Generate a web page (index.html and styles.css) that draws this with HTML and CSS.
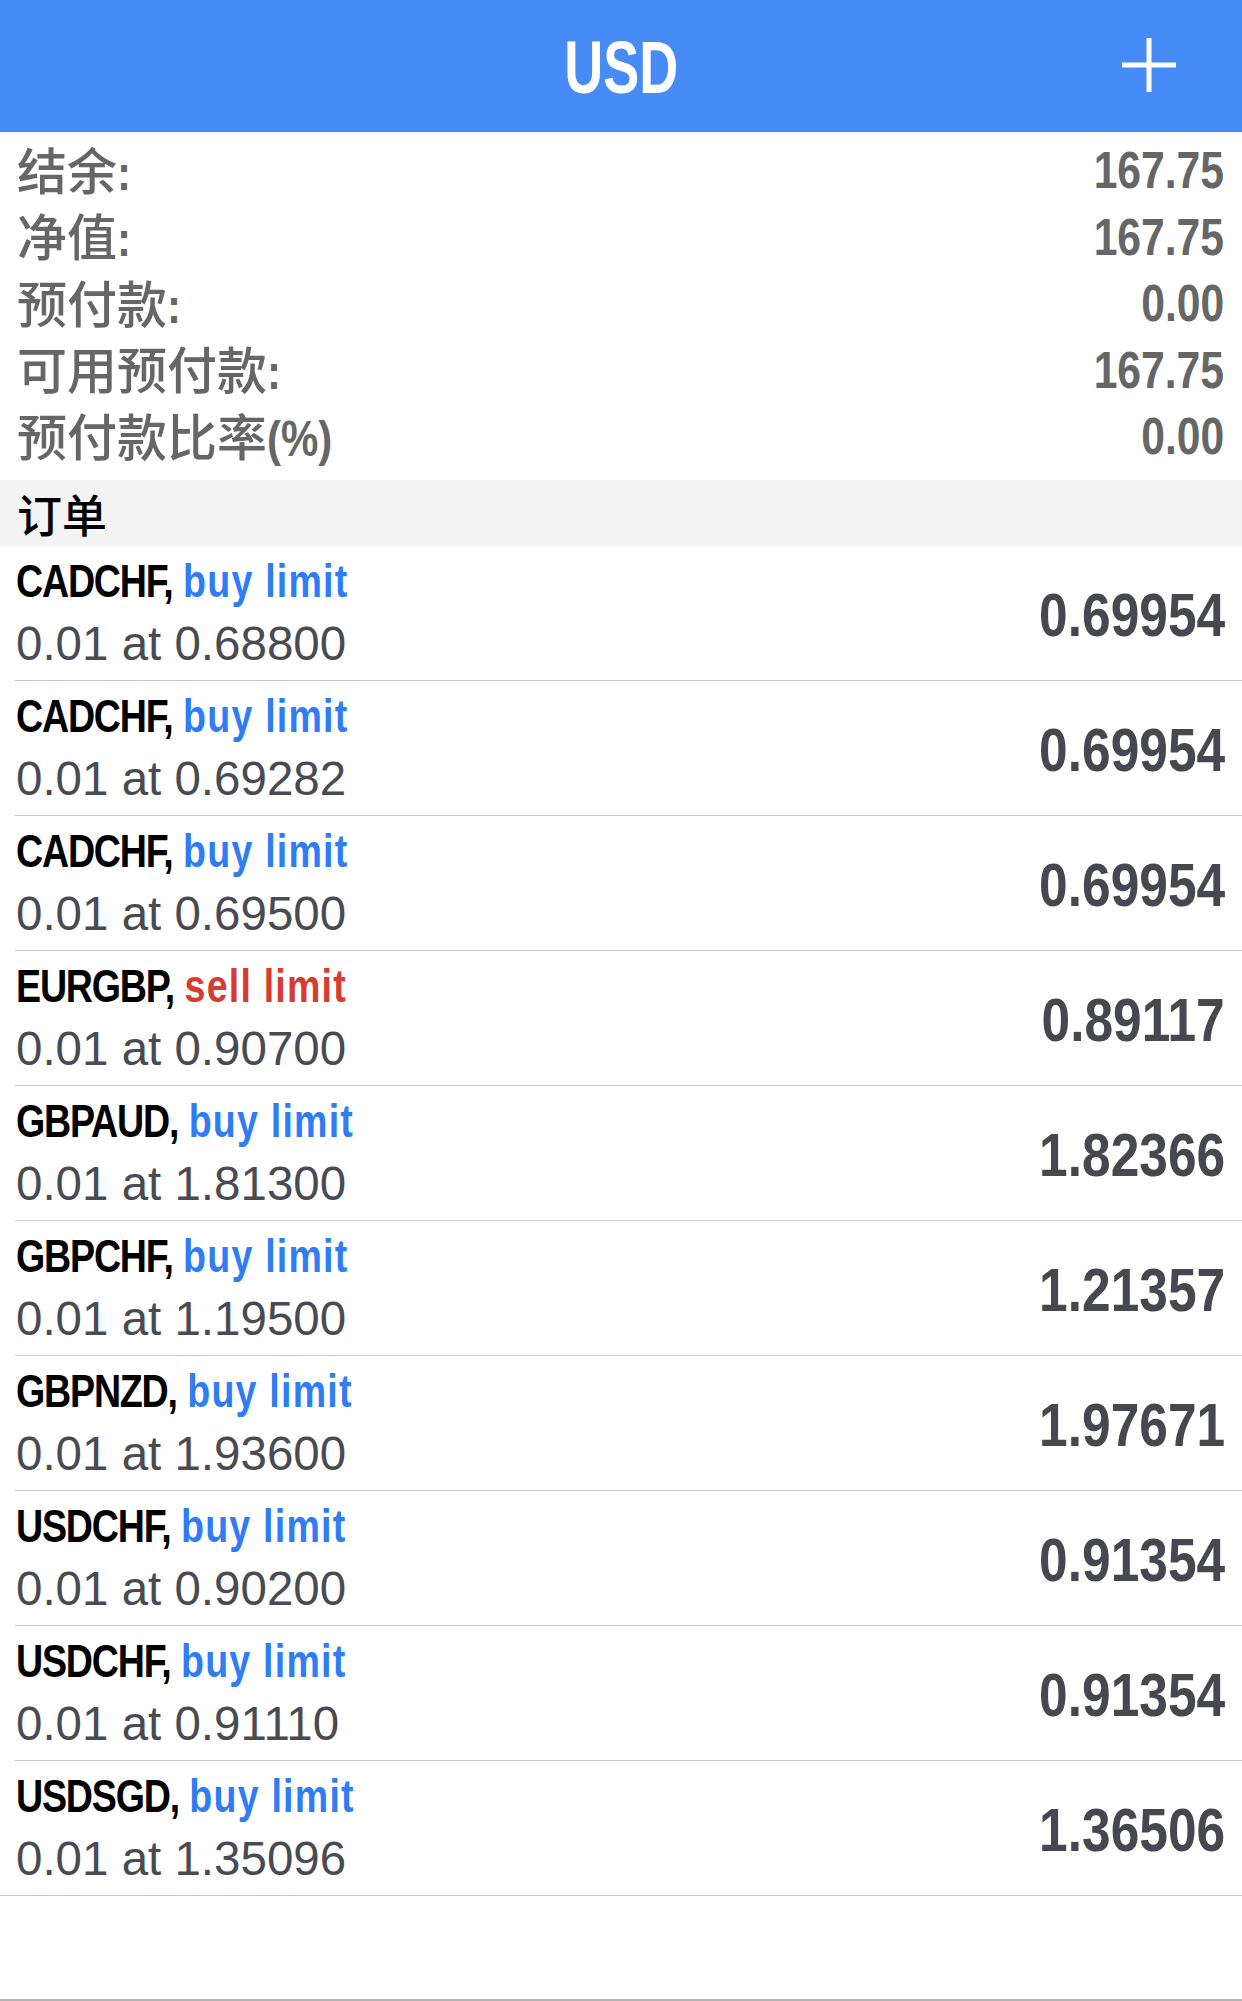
FILE: index.html
```html
<!DOCTYPE html>
<html lang="zh">
<head>
<meta charset="utf-8">
<title>USD</title>
<link rel="stylesheet" href="styles.css">
</head>
<body>
<header class="topbar">
  <div class="title">USD</div>
  <svg class="add" width="54" height="54" viewBox="0 0 54 54" aria-hidden="true">
    <path d="M27 0V54M0 27H54" stroke="#fff" stroke-width="5" fill="none"/>
  </svg>
</header>

<section class="summary">
  <div class="srow"><span class="label">结余<span class="lat">:</span></span><span class="val">167.75</span></div>
  <div class="srow"><span class="label">净值<span class="lat">:</span></span><span class="val">167.75</span></div>
  <div class="srow"><span class="label">预付款<span class="lat">:</span></span><span class="val">0.00</span></div>
  <div class="srow"><span class="label">可用预付款<span class="lat">:</span></span><span class="val">167.75</span></div>
  <div class="srow"><span class="label">预付款比率<span class="lat">(%)</span></span><span class="val">0.00</span></div>
</section>

<div class="band">订单</div>

<ul class="orders">
  <li class="order"><div class="info"><div class="sym"><span class="pair">CADCHF,</span> <span class="buy">buy limit</span></div><div class="detail">0.01 at 0.68800</div></div><div class="price">0.69954</div></li>
  <li class="order"><div class="info"><div class="sym"><span class="pair">CADCHF,</span> <span class="buy">buy limit</span></div><div class="detail">0.01 at 0.69282</div></div><div class="price">0.69954</div></li>
  <li class="order"><div class="info"><div class="sym"><span class="pair">CADCHF,</span> <span class="buy">buy limit</span></div><div class="detail">0.01 at 0.69500</div></div><div class="price">0.69954</div></li>
  <li class="order"><div class="info"><div class="sym"><span class="pair">EURGBP,</span> <span class="sell">sell limit</span></div><div class="detail">0.01 at 0.90700</div></div><div class="price">0.89117</div></li>
  <li class="order"><div class="info"><div class="sym"><span class="pair">GBPAUD,</span> <span class="buy">buy limit</span></div><div class="detail">0.01 at 1.81300</div></div><div class="price">1.82366</div></li>
  <li class="order"><div class="info"><div class="sym"><span class="pair">GBPCHF,</span> <span class="buy">buy limit</span></div><div class="detail">0.01 at 1.19500</div></div><div class="price">1.21357</div></li>
  <li class="order"><div class="info"><div class="sym"><span class="pair">GBPNZD,</span> <span class="buy">buy limit</span></div><div class="detail">0.01 at 1.93600</div></div><div class="price">1.97671</div></li>
  <li class="order"><div class="info"><div class="sym"><span class="pair">USDCHF,</span> <span class="buy">buy limit</span></div><div class="detail">0.01 at 0.90200</div></div><div class="price">0.91354</div></li>
  <li class="order"><div class="info"><div class="sym"><span class="pair">USDCHF,</span> <span class="buy">buy limit</span></div><div class="detail">0.01 at 0.91110</div></div><div class="price">0.91354</div></li>
  <li class="order last"><div class="info"><div class="sym"><span class="pair">USDSGD,</span> <span class="buy">buy limit</span></div><div class="detail">0.01 at 1.35096</div></div><div class="price">1.36506</div></li>
</ul>

<footer class="foot"></footer>
</body>
</html>
```

FILE: styles.css
```css
html, body {
  margin: 0;
  padding: 0;
  background: #fff;
}
body {
  width: 1242px;
  font-family: "Liberation Sans", "Noto Sans CJK SC", sans-serif;
  overflow: hidden;
}

.topbar {
  height: 132px;
  background: #478bf6;
  display: flex;
  align-items: center;
  justify-content: center;
  position: relative;
}
.title {
  color: #fff;
  font-family: "Liberation Sans", sans-serif;
  font-weight: 700;
  font-size: 75px;
  line-height: 1;
  transform: scaleX(0.72);
  transform-origin: center;
  padding-top: 2px;
}
.add {
  position: absolute;
  right: 66px;
  top: 38px;
}

.summary {
  padding: 5px 18px 10.5px 17px;
}
.srow {
  height: 66.5px;
  display: flex;
  align-items: center;
  justify-content: space-between;
  color: #666;
}
.label {
  font-family: "Noto Sans CJK SC", sans-serif;
  font-weight: 500;
  font-size: 50px;
  line-height: 1;
  white-space: nowrap;
}
.label .lat {
  display: inline-block;
  font-family: "Liberation Sans", sans-serif;
  font-weight: 700;
  transform: scaleX(0.84);
  transform-origin: left center;
}
.val {
  display: inline-block;
  font-family: "Liberation Sans", sans-serif;
  font-weight: 700;
  font-size: 52px;
  line-height: 1;
  transform: scaleX(0.82);
  transform-origin: right center;
}

.band {
  height: 66px;
  background: #f4f4f4;
  display: flex;
  align-items: center;
  padding-left: 17px;
  font-family: "Noto Sans CJK SC", sans-serif;
  font-size: 45px;
  font-weight: 500;
  color: #000;
}

.orders {
  list-style: none;
  margin: 0;
  padding: 0;
}
.order {
  height: 134px;
  margin-left: 15px;
  padding: 0 17px 0 1px;
  border-bottom: 1px solid #c8c7cc;
  display: flex;
  align-items: center;
  justify-content: space-between;
}
.order.last {
  margin-left: 0;
  padding-left: 16px;
}
.info {
  align-self: flex-start;
  padding-top: 3px;
}
.sym {
  font-family: "Liberation Sans", sans-serif;
  font-weight: 700;
  font-size: 47px;
  line-height: 63px;
  color: #000;
  white-space: nowrap;
  transform: scaleX(0.8);
  transform-origin: left center;
}
.pair { letter-spacing: -1.5px; }
.buy { color: #2f7cf4; letter-spacing: 1.5px; }
.sell { color: #d43d2f; letter-spacing: 1.5px; }
.detail {
  font-family: "Liberation Sans", sans-serif;
  font-size: 47.5px;
  line-height: 63px;
  color: #4a4a52;
  white-space: nowrap;
}
.price {
  font-family: "Liberation Sans", sans-serif;
  font-weight: 700;
  font-size: 62px;
  line-height: 1;
  padding-top: 4px;
  color: #47474f;
  transform: scaleX(0.83);
  transform-origin: right center;
}

.foot {
  margin-top: 103px;
  height: 2px;
  background: #b4b4b4;
}
```
